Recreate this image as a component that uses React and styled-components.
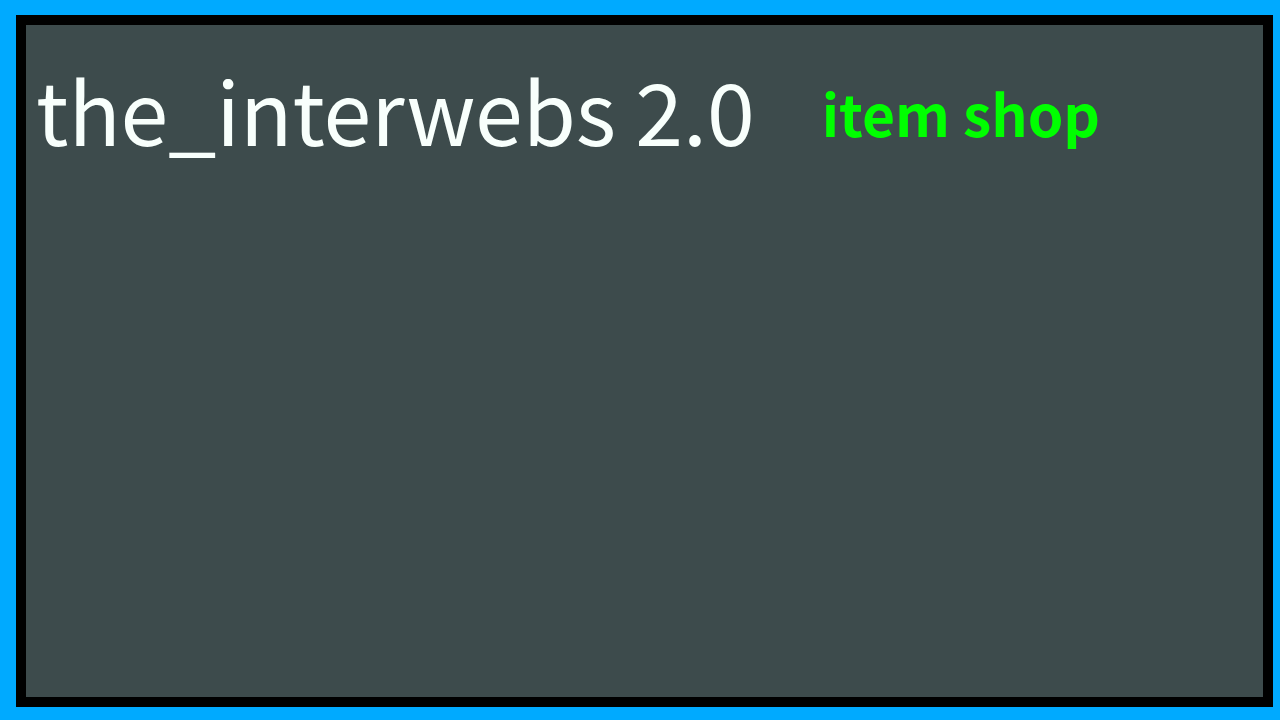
import React from "react";
import styled, { createGlobalStyle } from "styled-components";

const Global = createGlobalStyle`
  html, body {
    margin: 0;
    padding: 0;
    background: #00aaff;
    width: 1280px;
    height: 720px;
    overflow: hidden;
  }
  body {
    font-family: "Noto Sans CJK SC", "Noto Sans", sans-serif;
  }
`;

const Page = styled.div`
  box-sizing: border-box;
  width: 1280px;
  height: 720px;
  padding: 15px 7px 13px 16px;
`;

const Frame = styled.div`
  box-sizing: border-box;
  height: 100%;
  border: 10px solid #000;
  background: #3d4b4c;
  padding: 41px 10px;
`;

const Header = styled.div`
  display: flex;
  align-items: flex-start;
  gap: 67px;
`;

const Title = styled.h1`
  margin: 0;
  font-weight: 400;
  font-size: 86px;
  line-height: 1;
  color: #f8fffc;
  white-space: nowrap;
`;

const ShopLink = styled.a`
  margin-top: 18px;
  font-weight: 700;
  font-size: 57px;
  line-height: 1;
  color: #00ff00;
  text-decoration: none;
  white-space: nowrap;
`;

export default function App() {
  return (
    <>
      <Global />
      <Page>
        <Frame>
          <Header>
            <Title>the_interwebs 2.0</Title>
            <ShopLink>item shop</ShopLink>
          </Header>
        </Frame>
      </Page>
    </>
  );
}
